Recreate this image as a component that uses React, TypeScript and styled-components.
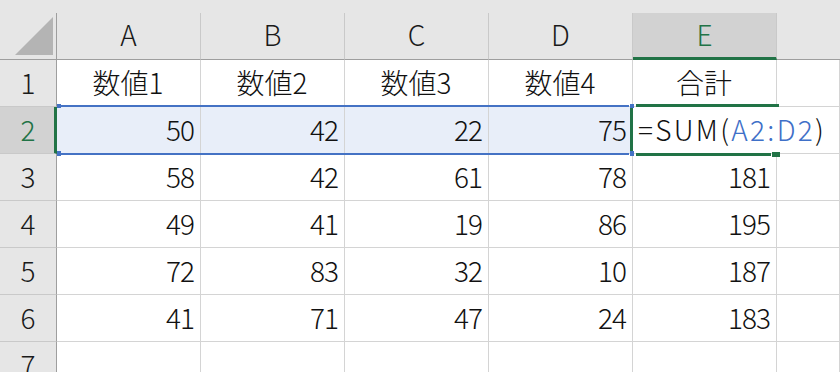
import React from "react";
import styled, { createGlobalStyle, css } from "styled-components";

const GREEN = "#217346";
const BLUE = "#4472c4";
const ROWHDR_W = 57;
const COL_W = 144;
const TOP_BAND = 13;
const HDR_H = 47;
const ROW_H = 47;

const Global = createGlobalStyle`
  html, body { margin: 0; padding: 0; background: #ffffff; overflow: hidden; }
  * { box-sizing: border-box; }
`;

const Sheet = styled.div`
  position: relative;
  width: 840px;
  height: 372px;
  overflow: hidden;
  display: grid;
  grid-template-columns: ${ROWHDR_W}px repeat(5, ${COL_W}px) 1fr;
  grid-template-rows: ${TOP_BAND}px ${HDR_H}px repeat(7, ${ROW_H}px);
  font-family: "Noto Sans CJK JP", "Noto Sans", sans-serif;
  font-weight: 300;
  color: #111;
`;

const TopBand = styled.div`
  grid-column: 1 / -1;
  background: #e6e6e6;
`;

const Corner = styled.div`
  background: #e6e6e6;
  border-right: 1px solid #9e9e9e;
  border-bottom: 1px solid #9e9e9e;
  display: flex;
  align-items: flex-end;
  justify-content: flex-end;
  padding: 0 3px 4px 0;
`;

const ColHeader = styled.div<{ $active?: boolean; $last?: boolean }>`
  background: #e6e6e6;
  border-right: ${(p) => (p.$last ? "none" : "1px solid #c9c9c9")};
  border-bottom: 1px solid #9e9e9e;
  display: flex;
  align-items: center;
  justify-content: center;
  font-size: 28px;
  padding-bottom: 4px;
  color: #1a1a1a;
  ${(p) =>
    p.$active &&
    css`
      background: #d2d2d2;
      color: ${GREEN};
      border-bottom: 3px solid ${GREEN};
      padding-bottom: 2px;
    `}
`;

const RowHeader = styled.div<{ $active?: boolean }>`
  background: #e6e6e6;
  border-right: 1px solid #9e9e9e;
  border-bottom: 1px solid #c9c9c9;
  display: flex;
  align-items: center;
  justify-content: center;
  font-size: 28px;
  padding-bottom: 3px;
  color: #1a1a1a;
  ${(p) =>
    p.$active &&
    css`
      background: #d2d2d2;
      color: ${GREEN};
      border-right: 3px solid ${GREEN};
      padding-left: 2px;
    `}
`;

const Cell = styled.div<{
  $align?: "left" | "center" | "right";
  $highlight?: boolean;
  $label?: boolean;
}>`
  background: ${(p) => (p.$highlight ? "#e8eef9" : "#ffffff")};
  border-right: 1px solid #d4d4d4;
  border-bottom: 1px solid #d4d4d4;
  display: flex;
  align-items: center;
  justify-content: ${(p) =>
    p.$align === "left" ? "flex-start" : p.$align === "center" ? "center" : "flex-end"};
  padding: 0 6px 2px 5px;
  font-size: 28px;
  letter-spacing: ${(p) => (p.$label ? "0" : "-1px")};
  white-space: nowrap;
  color: #111;
`;

const Formula = styled.div`
  position: relative;
  z-index: 3;
  background: #ffffff;
  border-bottom: 1px solid #d4d4d4;
  display: flex;
  align-items: center;
  padding: 0 0 2px 5px;
  font-size: 28px;
  letter-spacing: 2.3px;
  white-space: nowrap;
  overflow: visible;
  color: #111;
`;

const Ref = styled.span`
  color: #3f70c8;
`;

const Triangle = styled.svg`
  display: block;
`;

const RangeEdge = styled.div<{ $top: number }>`
  position: absolute;
  left: ${ROWHDR_W + 2}px;
  top: ${(p) => p.$top}px;
  width: ${COL_W * 4 - 6}px;
  height: 2px;
  background: ${BLUE};
  z-index: 4;
`;

const Handle = styled.div<{ $x: number; $y: number; $c: string; $w: number; $h: number }>`
  position: absolute;
  left: ${(p) => p.$x}px;
  top: ${(p) => p.$y}px;
  width: ${(p) => p.$w}px;
  height: ${(p) => p.$h}px;
  background: ${(p) => p.$c};
  z-index: 6;
`;

const ActiveLine = styled.div<{ $x: number; $y: number; $w: number; $h: number }>`
  position: absolute;
  left: ${(p) => p.$x}px;
  top: ${(p) => p.$y}px;
  width: ${(p) => p.$w}px;
  height: ${(p) => p.$h}px;
  background: ${GREEN};
  z-index: 5;
`;

const cols = ["A", "B", "C", "D", "E"];
const labels = ["数値1", "数値2", "数値3", "数値4", "合計"];
const data: (number | null)[][] = [
  [50, 42, 22, 75, null],
  [58, 42, 61, 78, 181],
  [49, 41, 19, 86, 195],
  [72, 83, 32, 10, 187],
  [41, 71, 47, 24, 183],
];

export default function App() {
  const row2Top = TOP_BAND + HDR_H + ROW_H; // 107
  const row2Bottom = row2Top + ROW_H; // 154
  const eLeft = ROWHDR_W + COL_W * 4; // 633
  return (
    <>
      <Global />
      <Sheet>
        <TopBand />

        <Corner>
          <Triangle width="38" height="38" viewBox="0 0 38 38">
            <polygon points="38,0 38,38 0,38" fill="#b4b4b4" />
          </Triangle>
        </Corner>
        {cols.map((c) => (
          <ColHeader key={c} $active={c === "E"}>
            {c}
          </ColHeader>
        ))}
        <ColHeader $last />

        <RowHeader>1</RowHeader>
        {labels.map((l) => (
          <Cell key={l} $align="center" $label>
            {l}
          </Cell>
        ))}
        <Cell />

        {data.map((row, ri) => {
          const n = ri + 2;
          return (
            <React.Fragment key={n}>
              <RowHeader $active={n === 2}>{n}</RowHeader>
              {row.map((v, ci) =>
                n === 2 && ci === 4 ? (
                  <Formula key={ci}>
                    =SUM(<Ref>A2:D2</Ref>)
                  </Formula>
                ) : (
                  <Cell key={ci} $highlight={n === 2}>
                    {v}
                  </Cell>
                )
              )}
              <Cell />
            </React.Fragment>
          );
        })}

        <RowHeader>7</RowHeader>
        {cols.map((c) => (
          <Cell key={c} />
        ))}
        <Cell />

        <RangeEdge $top={row2Top - 2} />
        <RangeEdge $top={row2Bottom - 1} />
        <Handle $x={ROWHDR_W} $y={row2Top - 3} $w={4} $h={4} $c={BLUE} />
        <Handle $x={ROWHDR_W} $y={row2Bottom - 3} $w={4} $h={5} $c={BLUE} />
        <Handle $x={eLeft - 3} $y={row2Top - 3} $w={4} $h={4} $c={BLUE} />
        <Handle $x={eLeft - 3} $y={row2Bottom - 3} $w={4} $h={5} $c={BLUE} />

        <ActiveLine $x={eLeft + 3} $y={row2Top - 3} $w={143} $h={3} />
        <ActiveLine $x={eLeft + 3} $y={row2Bottom - 1} $w={135} $h={3} />
        <ActiveLine $x={eLeft - 3} $y={row2Top + 1} $w={3} $h={ROW_H - 4} />
        <Handle $x={eLeft + 139} $y={row2Bottom - 2} $w={8} $h={5} $c={GREEN} />
      </Sheet>
    </>
  );
}
